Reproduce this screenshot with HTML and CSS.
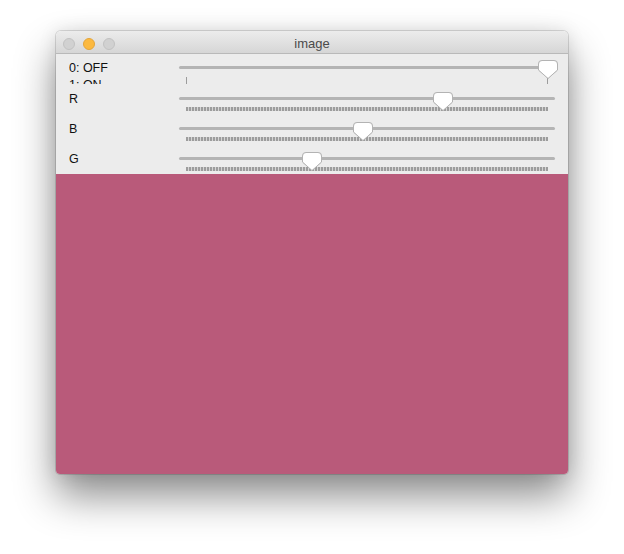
FILE: index.html
```html
<!DOCTYPE html>
<html>
<head>
<meta charset="utf-8">
<title>image</title>
<link rel="stylesheet" href="styles.css">
</head>
<body>
<div class="window">
  <div class="titlebar">
    <div class="lights">
      <span class="light gray"></span>
      <span class="light yellow"></span>
      <span class="light gray"></span>
    </div>
    <div class="title">image</div>
    <div></div>
  </div>
  <div class="panel">
    <div class="row first">
      <div class="label"><div>0: OFF</div><div>1: ON</div></div>
      <div class="slider">
        <div class="track"></div>
        <div class="ticks two"></div>
        <svg class="thumb" style="left:359px" width="20" height="19" viewBox="0 0 20 19"><path d="M4 0.5H16A3.5 3.5 0 0 1 19.5 4V10L10 18.5L0.5 10V4A3.5 3.5 0 0 1 4 0.5Z"/></svg>
      </div>
    </div>
    <div class="row">
      <div class="label"><div>R</div></div>
      <div class="slider">
        <div class="track"></div>
        <div class="ticks dense"></div>
        <svg class="thumb" style="left:254px" width="20" height="19" viewBox="0 0 20 19"><path d="M4 0.5H16A3.5 3.5 0 0 1 19.5 4V10L10 18.5L0.5 10V4A3.5 3.5 0 0 1 4 0.5Z"/></svg>
      </div>
    </div>
    <div class="row">
      <div class="label"><div>B</div></div>
      <div class="slider">
        <div class="track"></div>
        <div class="ticks dense"></div>
        <svg class="thumb" style="left:174px" width="20" height="19" viewBox="0 0 20 19"><path d="M4 0.5H16A3.5 3.5 0 0 1 19.5 4V10L10 18.5L0.5 10V4A3.5 3.5 0 0 1 4 0.5Z"/></svg>
      </div>
    </div>
    <div class="row">
      <div class="label"><div>G</div></div>
      <div class="slider">
        <div class="track"></div>
        <div class="ticks dense"></div>
        <svg class="thumb" style="left:123px" width="20" height="19" viewBox="0 0 20 19"><path d="M4 0.5H16A3.5 3.5 0 0 1 19.5 4V10L10 18.5L0.5 10V4A3.5 3.5 0 0 1 4 0.5Z"/></svg>
      </div>
    </div>
  </div>
  <div class="canvas"></div>
</div>
</body>
</html>
```
FILE: styles.css
```css
html, body {
  margin: 0;
  background: #ffffff;
}
body {
  min-height: 554px;
  box-sizing: border-box;
  padding: 31px 0 0 56px;
  font-family: "Liberation Sans", Arial, sans-serif;
}
.window {
  width: 512px;
  border-radius: 5px 5px 4px 4px;
  overflow: hidden;
  box-shadow: 0 0 0 1px rgba(0,0,0,0.13), 0 22px 40px rgba(0,0,0,0.45), 0 0 18px rgba(0,0,0,0.10);
}
.titlebar {
  height: 22px;
  display: grid;
  grid-template-columns: 1fr auto 1fr;
  align-items: center;
  background: linear-gradient(#ececec, #d6d6d6);
  border-bottom: 1px solid #b9b9b9;
}
.lights {
  display: flex;
  gap: 8px;
  padding-left: 7px;
  padding-top: 1px;
}
.light {
  width: 12px;
  height: 12px;
  border-radius: 50%;
  box-sizing: border-box;
}
.light.gray {
  background: #d1d1d1;
  border: 1px solid #c2c2c2;
}
.light.yellow {
  background: #fcb93f;
  border: 1px solid #e4a53a;
}
.title {
  font-size: 13px;
  color: #4b4b4b;
  line-height: 22px;
  padding-top: 2px;
}
.panel {
  background: #ececec;
  padding: 0 13px;
}
.row {
  height: 30px;
  display: flex;
}
.label {
  width: 110px;
  height: 30px;
  overflow: hidden;
  box-sizing: border-box;
  padding-top: 7px;
  font-size: 12.5px;
  line-height: 16.5px;
  color: #111;
}
.row.first .label {
  padding-top: 6px;
}
.slider {
  flex: 1;
  position: relative;
}
.track {
  height: 3px;
  margin-top: 13px;
  border-radius: 2px;
  background: #b4b4b4;
}
.row.first .track {
  margin-top: 12px;
}
.ticks {
  margin: 7px 7px 0;
  height: 4px;
}
.ticks.dense {
  background: repeating-linear-gradient(to right, #9c9c9c 0 2px, #d4d4d4 2px 3px);
}
.ticks.two {
  margin-top: 8px;
  height: 7px;
  background: linear-gradient(to right, #9c9c9c 0 1px, transparent 1px calc(100% - 1px), #9c9c9c calc(100% - 1px));
}
.thumb {
  position: absolute;
  top: 8px;
  filter: drop-shadow(0 0.5px 0.6px rgba(0,0,0,0.18));
}
.row.first .thumb {
  top: 6px;
}
.thumb path {
  fill: #ffffff;
  stroke: #b3b3b3;
  stroke-width: 1;
}
.canvas {
  height: 300px;
  background: rgb(185, 90, 122);
}
```
